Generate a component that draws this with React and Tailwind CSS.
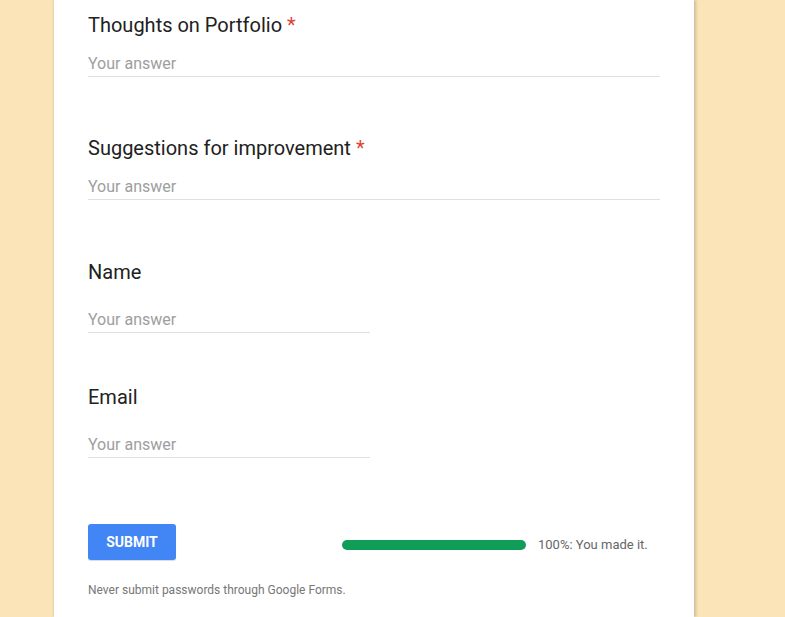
export default function App() {
  const font = { fontFamily: 'Roboto, "Liberation Sans", sans-serif' }
  return (
    <div className="min-h-[617px] bg-[#fce4b9]" style={font}>
      <div className="ml-[54px] w-[640px] min-h-[617px] bg-white shadow-[2px_0_3px_rgba(0,0,0,0.18),-1px_0_2px_rgba(0,0,0,0.08)] px-[34px] pt-[13px]">
        {/* Q1 */}
        <div className="text-[20px] leading-[24px] text-[#212121]">
          Thoughts on Portfolio <span className="text-[#db4437]">*</span>
        </div>
        <div className="mt-[15px] h-[25px] border-b border-[#e0e0e0] text-[16px] leading-[24px] text-[#9e9e9e]">Your answer</div>

        {/* Q2 */}
        <div className="mt-[59px] text-[20px] leading-[24px] text-[#212121]">
          Suggestions for improvement <span className="text-[#db4437]">*</span>
        </div>
        <div className="mt-[15px] h-[25px] border-b border-[#e0e0e0] text-[16px] leading-[24px] text-[#9e9e9e]">Your answer</div>

        {/* Q3 */}
        <div className="mt-[60px] text-[20px] leading-[24px] text-[#212121]">Name</div>
        <div className="mt-[24px] w-[282px] h-[25px] border-b border-[#e0e0e0] text-[16px] leading-[24px] text-[#9e9e9e]">Your answer</div>

        {/* Q4 */}
        <div className="mt-[52px] text-[20px] leading-[24px] text-[#212121]">Email</div>
        <div className="mt-[24px] w-[282px] h-[25px] border-b border-[#e0e0e0] text-[16px] leading-[24px] text-[#9e9e9e]">Your answer</div>

        {/* Submit + progress */}
        <div className="mt-[66px] flex items-center">
          <button className="w-[88px] h-[36px] rounded-[3px] bg-[#4285f4] text-white text-[14px] font-bold shadow-[0_1px_1px_rgba(0,0,0,0.15)]">
            SUBMIT
          </button>
          <div className="ml-[166px] mt-[6px] flex items-center">
            <div className="w-[184px] h-[10px] rounded-full bg-[#0f9d58]" />
            <span className="ml-[12px] text-[13px] text-[#666]">100%: You made it.</span>
          </div>
        </div>

        <div className="mt-[21px] text-[12px] text-[#777]">Never submit passwords through Google Forms.</div>
      </div>
    </div>
  )
}
